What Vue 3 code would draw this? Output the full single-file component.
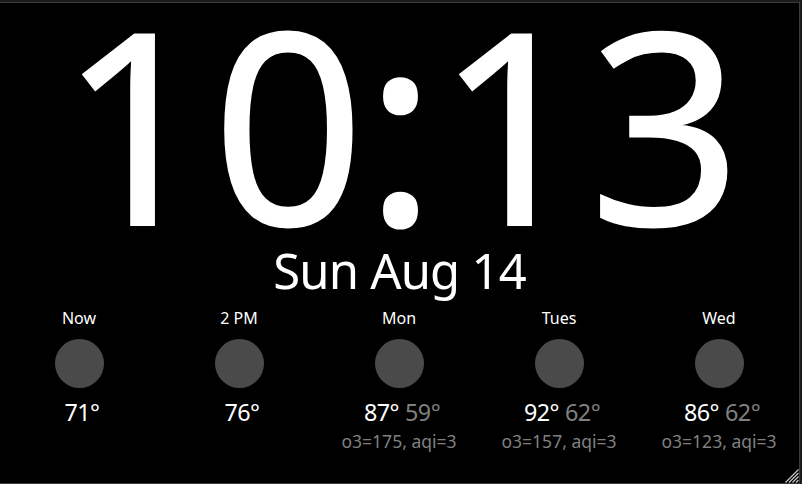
<script setup>
const forecast = [
  { label: 'Now', high: '71°' },
  { label: '2 PM', high: '76°' },
  { label: 'Mon', high: '87°', low: '59°', air: 'o3=175, aqi=3' },
  { label: 'Tues', high: '92°', low: '62°', air: 'o3=157, aqi=3' },
  { label: 'Wed', high: '86°', low: '62°', air: 'o3=123, aqi=3' },
]
</script>

<template>
  <div class="window">
    <main class="screen">
      <div class="clock">10:13</div>
      <div class="date">Sun Aug 14</div>
      <div class="forecast">
        <div v-for="f in forecast" :key="f.label" class="slot">
          <div class="label">{{ f.label }}</div>
          <div class="icon"></div>
          <div class="temps">
            <span>{{ f.high }}</span>
            <span v-if="f.low" class="low">{{ f.low }}</span>
          </div>
          <div v-if="f.air" class="air">{{ f.air }}</div>
        </div>
      </div>
      <svg class="grip" width="14" height="14" viewBox="0 0 14 14">
        <path d="M0.5 13.5L13.5 0.5M4 13.5L13.5 4M7.5 13.5L13.5 7.5M11 13.5L13.5 11" />
      </svg>
    </main>
  </div>
</template>

<style>
body {
  background: #1c1c1e;
  overflow: hidden;
}
</style>

<style scoped>
.window {
  box-sizing: border-box;
  width: 802px;
  height: 484px;
  padding: 2px 2px 0 0;
  background: #1c1c1e;
}
.screen {
  position: relative;
  box-sizing: border-box;
  height: 482px;
  border: solid #3c3c3e;
  border-width: 1px 1px 1px 0;
  background: #000;
  color: #fff;
  font-family: "Noto Sans", sans-serif;
  text-align: center;
  white-space: nowrap;
}
.clock {
  height: 236px;
  padding-left: 2px;
  font-size: 267px;
  line-height: 238px;
  -webkit-text-stroke: 1.8px #fff;
}
.date {
  font-size: 49px;
  line-height: 62px;
  letter-spacing: -0.8px;
}
.forecast {
  display: grid;
  grid-template-columns: repeat(5, 160px);
  margin-left: -1px;
}
.label {
  font-size: 16px;
  line-height: 34px;
}
.icon {
  width: 49px;
  height: 49px;
  margin: 4px auto 3px;
  border-radius: 50%;
  background: #4a4a4b;
}
.temps {
  display: flex;
  justify-content: center;
  gap: 6px;
  padding-left: 6px;
  font-size: 23.3px;
  line-height: 42px;
  letter-spacing: -0.5px;
}
.low {
  color: #808080;
}
.air {
  color: #808080;
  font-size: 17.5px;
  line-height: 16px;
}
.grip {
  position: absolute;
  right: 0;
  bottom: 0;
  fill: none;
  stroke: #c8c8c8;
  stroke-width: 1.2;
}
</style>
